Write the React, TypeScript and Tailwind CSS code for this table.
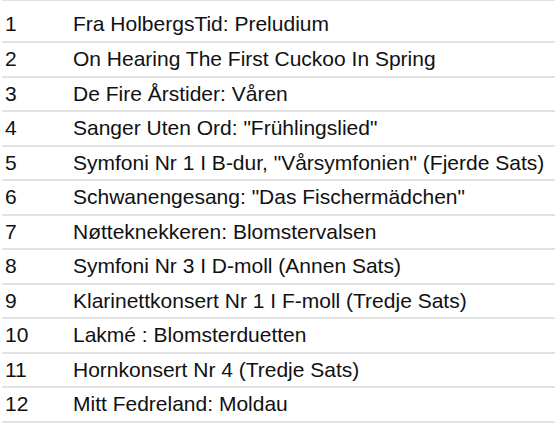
const tracks = [
  "Fra HolbergsTid: Preludium",
  "On Hearing The First Cuckoo In Spring",
  "De Fire Årstider: Våren",
  "Sanger Uten Ord: \"Frühlingslied\"",
  "Symfoni Nr 1 I B-dur, \"Vårsymfonien\" (Fjerde Sats)",
  "Schwanengesang: \"Das Fischermädchen\"",
  "Nøtteknekkeren: Blomstervalsen",
  "Symfoni Nr 3 I D-moll (Annen Sats)",
  "Klarinettkonsert Nr 1 I F-moll (Tredje Sats)",
  "Lakmé : Blomsterduetten",
  "Hornkonsert Nr 4 (Tredje Sats)",
  "Mitt Fedreland: Moldau",
];

export default function App() {
  return (
    <div className="w-[555px] h-[423px] overflow-hidden bg-white pl-[2px] font-['Liberation_Sans',Arial,sans-serif] text-[21px] text-[#111]">
      <div className="border-t border-[#e2e2e2]">
        {tracks.map((title, i) => (
          <div
            key={i}
            className={
              i === 0
                ? "flex items-center h-[42px] pt-[5px] border-b-2 border-[#e2e2e2]"
                : "flex items-center h-[34.5px] border-b-2 border-[#e2e2e2]"
            }
          >
            <span className="w-[71px] pl-[3px] leading-[24px]">{i + 1}</span>
            <span className="leading-[24px] whitespace-nowrap">{title}</span>
          </div>
        ))}
      </div>
    </div>
  );
}
